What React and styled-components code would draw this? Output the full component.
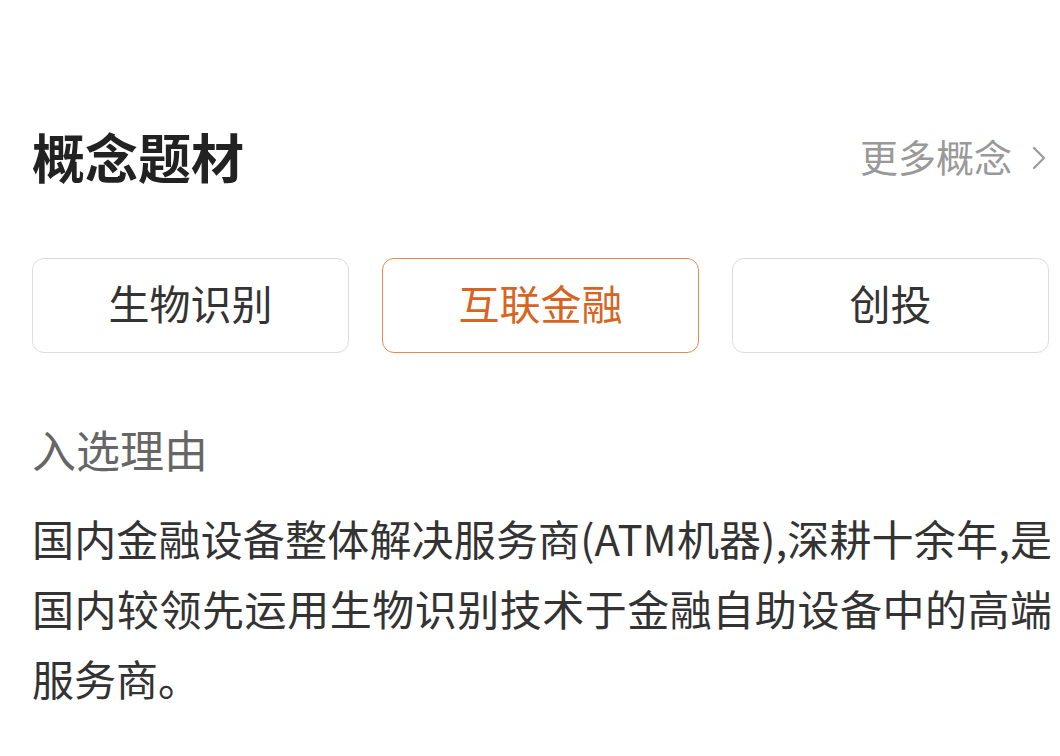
import styled, { createGlobalStyle } from "styled-components";

const GlobalStyle = createGlobalStyle`
  body {
    margin: 0;
    background: #fff;
    font-family: "Noto Sans CJK SC", "Noto Sans", sans-serif;
  }
`;

const chips = [
  { name: "生物识别" },
  { name: "互联金融", active: true },
  { name: "创投" },
];

const reason =
  "国内金融设备整体解决服务商(ATM机器),深耕十余年,是国内较领先运用生物识别技术于金融自助设备中的高端服务商。";

const ChevronRight = () => (
  <svg width="18" height="26" viewBox="0 0 18 26" fill="none">
    <polyline
      points="4,3 14,13 4,23"
      stroke="#9a9a9a"
      strokeWidth="2.2"
      strokeLinecap="round"
      strokeLinejoin="round"
    />
  </svg>
);

const App = () => {
  return (
    <Wrapper>
      <GlobalStyle />
      <Header>
        <Title>概念题材</Title>
        <MoreLink>
          更多概念
          <ChevronRight />
        </MoreLink>
      </Header>
      <ChipRow>
        {chips.map((chip) => (
          <Chip key={chip.name} $active={chip.active}>
            {chip.name}
          </Chip>
        ))}
      </ChipRow>
      <Label>入选理由</Label>
      <Reason>{reason}</Reason>
    </Wrapper>
  );
};

const Wrapper = styled.div`
  padding: 0 8px 0 32px;
  color: #333;
`;

const Header = styled.div`
  margin-top: 126px;
  margin-right: 4px;
  height: 60px;
  display: flex;
  align-items: center;
  justify-content: space-between;
`;

const Title = styled.h2`
  margin: 0;
  font-size: 53px;
  line-height: 60px;
  font-weight: 700;
  color: #222;
`;

const MoreLink = styled.a`
  display: flex;
  align-items: center;
  gap: 18px;
  font-size: 38px;
  line-height: 60px;
  color: #999;
  svg {
    margin-top: 4px;
  }
`;

const ChipRow = styled.div`
  margin-top: 72px;
  margin-right: 3px;
  display: grid;
  grid-template-columns: repeat(3, 1fr);
  gap: 33px;
`;

const Chip = styled.button`
  height: 95px;
  border-radius: 12px;
  background: #fff;
  border: 1.5px solid ${(p) => (p.$active ? "#e48a4e" : "#dcdcdc")};
  color: ${(p) => (p.$active ? "#d8641f" : "#333")};
  font-family: inherit;
  font-size: 41px;
  padding: 0 0 8px;
  display: flex;
  align-items: center;
  justify-content: center;
`;

const Label = styled.div`
  margin-top: 66px;
  font-size: 44px;
  line-height: 60px;
  color: #666;
`;

const Reason = styled.p`
  margin: 24px 0 0;
  font-size: 42px;
  line-height: 70px;
  text-align: justify;
  color: #333;
`;

export default App;
